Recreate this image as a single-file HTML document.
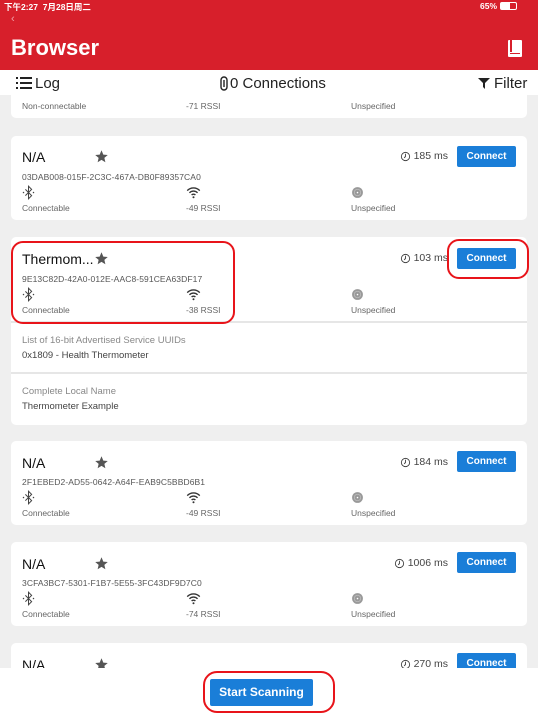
<!DOCTYPE html>
<html><head><meta charset="utf-8"><style>
*{margin:0;padding:0;box-sizing:border-box}
body{width:538px;height:717px;overflow:hidden;background:#efefef;font-family:"Liberation Sans","Noto Sans CJK SC",sans-serif;position:relative}
.abs{position:absolute}
.hdr{left:0;top:0;width:538px;height:70px;background:#d71f2b;color:#fff;z-index:5}
.tb{left:0;top:70px;width:538px;height:25px;background:#fff;font-size:15px;color:#222;z-index:5}
.card{position:absolute;left:11px;width:516px;background:#fff;border-radius:5px;overflow:hidden}
.name{position:absolute;left:11px;font-size:14px;color:#111}
.star{position:absolute;left:83px}
.uuid{position:absolute;left:11px;font-size:8.5px;color:#555;letter-spacing:.1px}
.lbl{position:absolute;font-size:8.5px;color:#666}
.btn{position:absolute;left:446px;width:59px;height:21px;background:#1a7ed8;color:#fff;font-size:10px;font-weight:bold;text-align:center;line-height:21px;border-radius:2px}
.time{position:absolute;right:79px;font-size:10.5px;color:#444}
.ic{position:absolute}
.ring{position:absolute;border:2.5px solid #e8141a;border-radius:10px;z-index:9}
</style></head><body>
<svg width="0" height="0" style="position:absolute">
<defs>
<symbol id="st" viewBox="0 0 24 24"><path d="M12 2l2.9 6.9 7.1.6-5.4 4.7 1.6 7-6.2-3.8-6.2 3.8 1.6-7L2 9.5l7.1-.6z" fill="#555"/></symbol>
<symbol id="bt" viewBox="0 0 24 24"><path d="M7 7l10 10-5 5V2l5 5L7 17" fill="none" stroke="#444" stroke-width="1.6"/><circle cx="4" cy="12" r="1.2" fill="#444"/><circle cx="20" cy="12" r="1.2" fill="#444"/></symbol>
<symbol id="wf" viewBox="0 0 24 24"><path d="M2 9a14 14 0 0 1 20 0M5.5 12.5a9 9 0 0 1 13 0M9 16a4 4 0 0 1 6 0" fill="none" stroke="#333" stroke-width="2.2"/><circle cx="12" cy="19.5" r="1.6" fill="#333"/></symbol>
<symbol id="un" viewBox="0 0 24 24"><circle cx="12" cy="12" r="10" fill="#999"/><circle cx="12" cy="12" r="6" fill="none" stroke="#ccc" stroke-width="1"/><circle cx="12" cy="12" r="1.5" fill="#fff"/></symbol>
<symbol id="ck" viewBox="0 0 24 24"><circle cx="12" cy="12" r="9" fill="none" stroke="#444" stroke-width="2"/><path d="M12 6v6l-3 3" fill="none" stroke="#444" stroke-width="2"/></symbol>
</defs></svg>
<div class="abs hdr">
 <div class="abs" style="left:4px;top:1px;font-size:8.5px;font-weight:bold">下午2:27 &nbsp;7月28日周二</div>
 <div class="abs" style="left:480px;top:1px;font-size:8.5px;font-weight:bold">65%</div>
 <div class="abs" style="left:500px;top:2px;width:17px;height:8px;border:1px solid #fff;border-radius:2px"><div style="width:9px;height:6px;background:#fff"></div></div>
 <div class="abs" style="left:11px;top:13px;font-size:11px;color:#f0a0a8">‹</div>
 <div class="abs" style="left:11px;top:35px;font-size:22px;font-weight:bold">Browser</div>
 <div class="abs" style="left:508px;top:40px;width:14px;height:17px;background:#fff;border-radius:1px"><div style="position:absolute;left:2px;top:0;width:2px;height:12px;background:#d71f2b"></div><div style="position:absolute;left:2px;top:13px;width:10px;height:1px;background:#d71f2b"></div></div>
</div>
<div class="abs tb">
 <svg class="abs" style="left:16px;top:7px" width="16" height="12" viewBox="0 0 16 12"><g fill="#222"><rect x="0" y="0" width="2" height="2"/><rect x="0" y="5" width="2" height="2"/><rect x="0" y="10" width="2" height="2"/><rect x="4" y="0" width="12" height="2"/><rect x="4" y="5" width="12" height="2"/><rect x="4" y="10" width="12" height="2"/></g></svg>
 <div class="abs" style="left:35px;top:5px">Log</div>
 <svg class="abs" style="left:220px;top:6px" width="8" height="15" viewBox="0 0 8 15"><rect x="1" y="1" width="6" height="13" rx="3" fill="none" stroke="#222" stroke-width="1.4"/><path d="M4 4v7" stroke="#222" stroke-width="1.4"/></svg>
 <div class="abs" style="left:230px;top:5px">0 Connections</div>
 <svg class="abs" style="left:478px;top:8px" width="12" height="11" viewBox="0 0 12 11"><path d="M0 0h12L7 5v6L5 9V5z" fill="#222"/></svg>
 <div class="abs" style="left:494px;top:5px">Filter</div>
</div>

<div class="card" style="top:80px;height:38px">
 <div class="lbl" style="left:11px;top:21px">Non-connectable</div>
 <div class="lbl" style="left:175px;top:21px">-71 RSSI</div>
 <div class="lbl" style="left:340px;top:21px">Unspecified</div>
</div>

<div class="card" style="top:136px;height:84px">
 <div class="name" style="top:13px">N/A</div><svg class="star" style="top:13px" width="15" height="15"><use href="#st"/></svg>
 <svg class="ic" style="left:389px;top:15px" width="11" height="11"><use href="#ck"/></svg><div class="time" style="top:14px">185 ms</div><div class="btn" style="top:10px">Connect</div>
 <div class="uuid" style="top:36px">03DAB008-015F-2C3C-467A-DB0F89357CA0</div>
 <svg class="ic" style="left:10px;top:49px" width="15" height="15"><use href="#bt"/></svg><svg class="ic" style="left:175px;top:49px" width="15" height="15"><use href="#wf"/></svg><svg class="ic" style="left:340px;top:50px" width="13" height="13"><use href="#un"/></svg>
 <div class="lbl" style="left:11px;top:67px">Connectable</div><div class="lbl" style="left:175px;top:67px">-49 RSSI</div><div class="lbl" style="left:340px;top:67px">Unspecified</div>
</div>

<div class="card" style="top:237px;height:188px">
 <div class="name" style="top:14px">Thermom...</div><svg class="star" style="top:14px" width="15" height="15"><use href="#st"/></svg>
 <svg class="ic" style="left:389px;top:16px" width="11" height="11"><use href="#ck"/></svg><div class="time" style="top:15px">103 ms</div><div class="btn" style="top:11px">Connect</div>
 <div class="uuid" style="top:37px">9E13C82D-42A0-012E-AAC8-591CEA63DF17</div>
 <svg class="ic" style="left:10px;top:50px" width="15" height="15"><use href="#bt"/></svg><svg class="ic" style="left:175px;top:50px" width="15" height="15"><use href="#wf"/></svg><svg class="ic" style="left:340px;top:51px" width="13" height="13"><use href="#un"/></svg>
 <div class="lbl" style="left:11px;top:68px">Connectable</div><div class="lbl" style="left:175px;top:68px">-38 RSSI</div><div class="lbl" style="left:340px;top:68px">Unspecified</div>
 <div class="abs" style="left:0;top:84px;width:516px;height:2px;background:#e6e6e6"></div>
 <div class="abs" style="left:11px;top:98px;font-size:9.5px;color:#888">List of 16-bit Advertised Service UUIDs</div>
 <div class="abs" style="left:11px;top:113px;font-size:9.5px;color:#444">0x1809 - Health Thermometer</div>
 <div class="abs" style="left:0;top:135px;width:516px;height:2px;background:#e6e6e6"></div>
 <div class="abs" style="left:11px;top:149px;font-size:9.5px;color:#888">Complete Local Name</div>
 <div class="abs" style="left:11px;top:164px;font-size:9.5px;color:#444">Thermometer Example</div>
</div>

<div class="card" style="top:441px;height:84px">
 <div class="name" style="top:14px">N/A</div><svg class="star" style="top:14px" width="15" height="15"><use href="#st"/></svg>
 <svg class="ic" style="left:389px;top:16px" width="11" height="11"><use href="#ck"/></svg><div class="time" style="top:15px">184 ms</div><div class="btn" style="top:10px">Connect</div>
 <div class="uuid" style="top:36px">2F1EBED2-AD55-0642-A64F-EAB9C5BBD6B1</div>
 <svg class="ic" style="left:10px;top:49px" width="15" height="15"><use href="#bt"/></svg><svg class="ic" style="left:175px;top:49px" width="15" height="15"><use href="#wf"/></svg><svg class="ic" style="left:340px;top:50px" width="13" height="13"><use href="#un"/></svg>
 <div class="lbl" style="left:11px;top:67px">Connectable</div><div class="lbl" style="left:175px;top:67px">-49 RSSI</div><div class="lbl" style="left:340px;top:67px">Unspecified</div>
</div>

<div class="card" style="top:542px;height:84px">
 <div class="name" style="top:14px">N/A</div><svg class="star" style="top:14px" width="15" height="15"><use href="#st"/></svg>
 <svg class="ic" style="left:383px;top:16px" width="11" height="11"><use href="#ck"/></svg><div class="time" style="top:15px">1006 ms</div><div class="btn" style="top:10px">Connect</div>
 <div class="uuid" style="top:36px">3CFA3BC7-5301-F1B7-5E55-3FC43DF9D7C0</div>
 <svg class="ic" style="left:10px;top:49px" width="15" height="15"><use href="#bt"/></svg><svg class="ic" style="left:175px;top:49px" width="15" height="15"><use href="#wf"/></svg><svg class="ic" style="left:340px;top:50px" width="13" height="13"><use href="#un"/></svg>
 <div class="lbl" style="left:11px;top:67px">Connectable</div><div class="lbl" style="left:175px;top:67px">-74 RSSI</div><div class="lbl" style="left:340px;top:67px">Unspecified</div>
</div>

<div class="card" style="top:643px;height:60px">
 <div class="name" style="top:14px">N/A</div><svg class="star" style="top:14px" width="15" height="15"><use href="#st"/></svg>
 <svg class="ic" style="left:389px;top:16px" width="11" height="11"><use href="#ck"/></svg><div class="time" style="top:15px">270 ms</div><div class="btn" style="top:10px">Connect</div>
</div>

<div class="abs" style="left:0;top:668px;width:538px;height:49px;background:#fff"></div>
<div class="abs" style="left:210px;top:679px;width:103px;height:27px;background:#1a7ed8;color:#fff;font-size:12px;font-weight:bold;text-align:center;line-height:27px;border-radius:2px">Start Scanning</div>

<div class="ring" style="left:11px;top:241px;width:224px;height:83px;border-radius:12px"></div>
<div class="ring" style="left:447px;top:239px;width:82px;height:40px;border-radius:12px"></div>
<div class="ring" style="left:203px;top:671px;width:132px;height:42px;border-radius:14px"></div>
</body></html>
